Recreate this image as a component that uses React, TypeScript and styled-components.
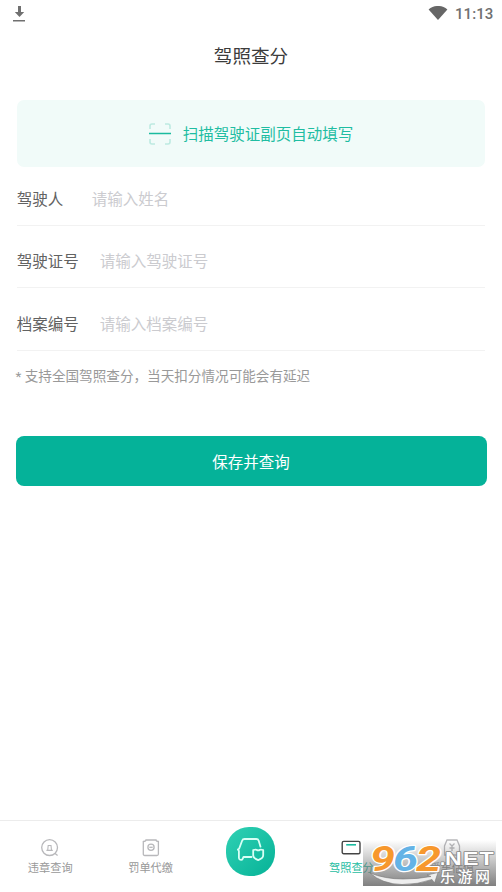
import React from 'react';
import styled, { createGlobalStyle } from 'styled-components';

const Global = createGlobalStyle`
  * { box-sizing: border-box; }
  body { margin: 0; background: #fff; font-family: Roboto, "Noto Sans CJK SC", sans-serif; }
  svg { display: block; }
`;
const Screen = styled.div`
  position: relative; display: flex; flex-direction: column;
  width: 502px; height: 892px; overflow: hidden; background: #fff;
`;
const StatusBar = styled.div`
  display: flex; align-items: center; height: 27px; padding: 0 8.5px 0 13px;
`;
const Clock = styled.time`
  margin-left: 7px; padding-top: 1px; color: #707070; font-size: 15px; font-weight: 500; line-height: 26px; letter-spacing: 0.1px;
`;
const Spacer = styled.div`flex: 1;`;
const Title = styled.h1`
  margin: 0; height: 56px; padding-top: 2px; text-align: center; color: #3c3c3c;
  font-size: 18.6px; font-weight: 400; line-height: 56px;
`;
const Content = styled.main`flex: 1; padding: 17px 16px 0;`;
const ScanCard = styled.button`
  display: flex; align-items: center; justify-content: center; gap: 12px;
  width: 468px; height: 67px; margin: 0 0 0 1px; padding: 0; border: 0; border-radius: 7px;
  background: #f1fbf9; color: #1fbda2; font: inherit; font-size: 15.5px;
`;
const ScanText = styled.span`padding-bottom: 2px;`;
const Field = styled.label<{ $gap: number; $height: number; $top: number }>`
  display: flex; align-items: center; gap: ${p => p.$gap}px; height: ${p => p.$height}px;
  margin: 0 1px 0 0.8px; border-bottom: 1px solid #f2f2f2; padding-top: ${p => p.$top}px;
  color: #626262; font-size: 15.5px; line-height: 24px;
`;
const Placeholder = styled.span`color: #cbcbcf;`;
const Note = styled.p`
  margin: 13px 0 0 -0.5px; color: #999; font-size: 13.6px; line-height: 24px;
`;
const Submit = styled.button`
  display: block; width: 471px; height: 50px; margin: 48px 0 0 -0.4px; padding: 0 0 1px; border: 0;
  border-radius: 8px; background: #05b299; color: #fff; font: inherit; font-size: 15.5px;
`;
const TabBar = styled.nav`
  display: grid; grid-template-columns: repeat(5, 1fr); height: 72px; border-top: 1px solid #ececec;
`;
const Tab = styled.div<{ $active?: boolean }>`
  display: flex; flex-direction: column; align-items: center; padding-top: 17px;
  color: ${p => (p.$active ? '#1fbda2' : '#999')}; font-size: 11.2px; line-height: 18px; white-space: nowrap;
`;
const TabLabel = styled.span`margin-top: 2px;`;
const CenterTab = styled.div`
  display: flex; justify-content: center; padding-top: 6px;
`;
const Round = styled.div`
  width: 49px; height: 49px; border-radius: 23px;
  background: linear-gradient(135deg, #30d1b4, #06b297);
`;
const Watermark = styled.div`
  position: absolute; left: 363px; top: 840px; width: 133px; height: 46px;
  background: linear-gradient(rgba(110,110,110,0), rgba(110,110,110,.3) 35%, rgba(110,110,110,.88));
`;

function Download() {
  return <svg width="13" height="16" viewBox="0 0 13 16" fill="#707070"><path d="M5 0h3v6h3.2L6.5 11 1.8 6H5zM0 14h12v1.6H0z" /></svg>;
}
function Wifi() {
  return <svg width="20" height="16" viewBox="0 0 20 16" fill="#666"><path d="M.6 3.4C6-1.2 14-1.2 19.4 3.4L10 14z" /></svg>;
}
function Scan() {
  return (
    <svg width="22" height="22" viewBox="0 0 22 22" fill="none">
      <path d="M1 6V3q0-2 2-2h3M16 1h3q2 0 2 2v3M21 16v3q0 2-2 2h-3M6 21H3q-2 0-2-2v-3" stroke="#bdeae1" strokeWidth="1.6" />
      <path d="M0 10.5h22" stroke="#1abb9f" strokeWidth="1.5" />
    </svg>
  );
}
function Violation() {
  return (
    <svg width="20" height="20" viewBox="0 0 20 20" fill="none" stroke="#b8b8bb" strokeWidth="1.3">
      <circle cx="9.6" cy="9.6" r="7.9" />
      <path d="M14.8 15.2l2.8 2.3" />
      <path d="M6.4 12.4h6.4M7.7 12.2l.5-4.7h2.8l.5 4.7" strokeWidth="1.1" />
    </svg>
  );
}
function Ticket() {
  return (
    <svg width="20" height="20" viewBox="0 0 20 20" fill="none" stroke="#b8b8bb" strokeWidth="1.3">
      <path d="M5 2h10q0 1.3 2.4 1.5v12.5q0 1.5-1.5 1.5H3.8q-1.5 0-1.5-1.5V3.5Q5 3.3 5 2z" />
      <circle cx="10" cy="9.3" r="3.1" /><path d="M8.3 9.3h3.4" />
    </svg>
  );
}
function Car() {
  return (
    <svg width="49" height="49" viewBox="0 0 49 49" fill="none" stroke="#d8fff5" strokeWidth="1.8" strokeLinejoin="round" strokeLinecap="round">
      <path d="M25.5 30H17.5l-1.3 2.7q-3.2.7-3.3-2V24l-1-1.5 1.2-.8 3-8q.6-1.7 2.4-1.7h11.8q1.8 0 2.4 1.7l1.8 6" />
      <path d="M27.2 23q2.6-.7 3.2-.3 1.8 1.3 3.6 0 .8-.4 3.2.3v5.3q0 3-5 4.8-5-1.8-5-4.8z" />
    </svg>
  );
}
function License() {
  return (
    <svg width="20" height="20" viewBox="0 0 20 20" fill="none">
      <rect x="1.2" y="3.4" width="17.8" height="12.4" rx="1.5" stroke="#444" strokeWidth="1.4" />
      <path d="M5.2 6.8h9.8" stroke="#1abb9f" strokeWidth="1.6" />
    </svg>
  );
}
function CarValue() {
  return (
    <svg width="20" height="20" viewBox="0 0 20 20" fill="none" stroke="#b8b8bb" strokeWidth="1.3">
      <path d="M5 2h10l2.5 6v9h-15V8zM7.5 5.5 10 8l2.5-2.5M10 8v5M7.5 10h5" />
    </svg>
  );
}
function WatermarkLogo() {
  return (
    <svg width="133" height="46" viewBox="0 0 133 46" fontFamily="Liberation Sans, sans-serif" fontWeight="700">
      <path d="M7 33Q22 39 40 39 55 39 68 36.5L64 35 75 32.5 71.5 43 69 39.5Q55 44.5 39 44.5 19 44 7 33z" fill="#eee" stroke="#777" strokeWidth=".6" />
      <g fontFamily="Roboto, sans-serif" fontSize="35" fontStyle="italic" strokeLinejoin="round">
        <g stroke="#fff" strokeWidth="4" fill="#fff" aria-hidden="true" />
        <g strokeWidth="2.4" paintOrder="stroke" stroke="#fff">
          <text x="7" y="30.5" fill="#f7982d" textLength="25" lengthAdjust="spacingAndGlyphs">9</text>
          <text x="30" y="30.5" fill="#64b3e6" textLength="25" lengthAdjust="spacingAndGlyphs">6</text>
          <text x="53" y="30.5" fill="#f7982d" textLength="25" lengthAdjust="spacingAndGlyphs">2</text>
        </g>
      </g>
      <g fill="#fff" stroke="#888" strokeWidth="1.6" strokeLinejoin="round" paintOrder="stroke">
        <text x="77" y="24.5" fontSize="18.5">.</text>
        <text x="82" y="24.5" fontSize="18.5" textLength="50" lengthAdjust="spacingAndGlyphs" letterSpacing="1">NET</text>
        <text x="77" y="41.5" fontSize="15" textLength="50" fontWeight="500" fontFamily="Noto Sans CJK SC, sans-serif">乐游网</text>
      </g>
    </svg>
  );
}

export default function App() {
  return (
    <>
      <Global />
      <Screen>
        <StatusBar><Download /><Spacer /><Wifi /><Clock>11:13</Clock></StatusBar>
        <Title>驾照查分</Title>
        <Content>
          <ScanCard><Scan /><ScanText>扫描驾驶证副页自动填写</ScanText></ScanCard>
          <Field $gap={28.5} $height={59} $top={7}>驾驶人<Placeholder>请输入姓名</Placeholder></Field>
          <Field $gap={21} $height={62} $top={10}>驾驶证号<Placeholder>请输入驾驶证号</Placeholder></Field>
          <Field $gap={21} $height={63} $top={12}>档案编号<Placeholder>请输入档案编号</Placeholder></Field>
          <Note>* 支持全国驾照查分，当天扣分情况可能会有延迟</Note>
          <Submit>保存并查询</Submit>
        </Content>
        <TabBar>
          <Tab><Violation /><TabLabel>违章查询</TabLabel></Tab>
          <Tab><Ticket /><TabLabel>罚单代缴</TabLabel></Tab>
          <CenterTab><Round><Car /></Round></CenterTab>
          <Tab $active><License /><TabLabel>驾照查分</TabLabel></Tab>
          <Tab><CarValue /><TabLabel>爱车估值</TabLabel></Tab>
        </TabBar>
        <Watermark><WatermarkLogo /></Watermark>
      </Screen>
    </>
  );
}
